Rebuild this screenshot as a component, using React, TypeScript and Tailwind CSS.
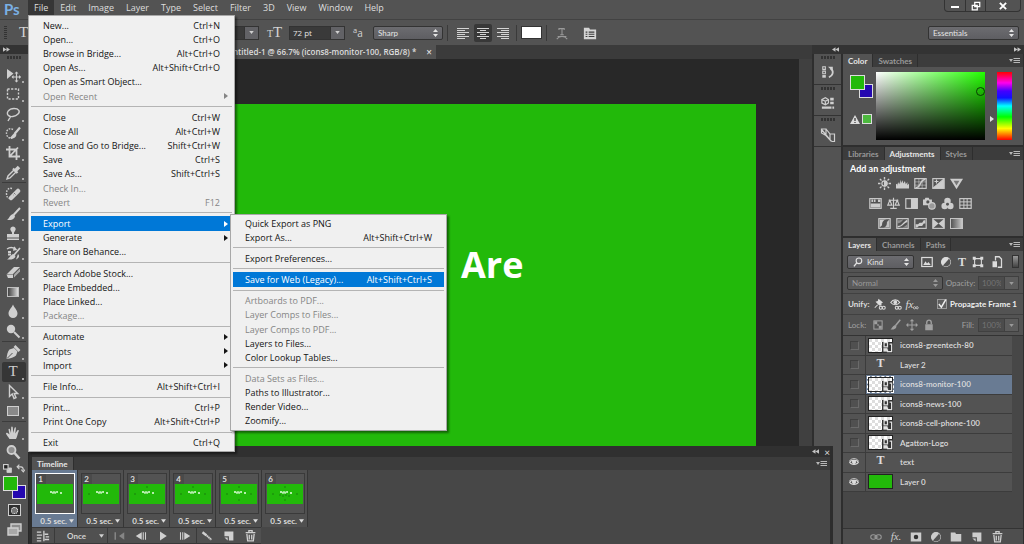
import React from 'react';

type IconProps = { className?: string };

type MenuEntry = {
  label: string;
  keys?: string;
  disabled?: boolean;
  active?: boolean;
  sub?: boolean;
};

const menuBar = ['File', 'Edit', 'Image', 'Layer', 'Type', 'Select', 'Filter', '3D', 'View', 'Window', 'Help'];

const fileMenu: MenuEntry[][] = [
  [
    { label: 'New...', keys: 'Ctrl+N' },
    { label: 'Open...', keys: 'Ctrl+O' },
    { label: 'Browse in Bridge...', keys: 'Alt+Ctrl+O' },
    { label: 'Open As...', keys: 'Alt+Shift+Ctrl+O' },
    { label: 'Open as Smart Object...' },
    { label: 'Open Recent', disabled: true, sub: true },
  ],
  [
    { label: 'Close', keys: 'Ctrl+W' },
    { label: 'Close All', keys: 'Alt+Ctrl+W' },
    { label: 'Close and Go to Bridge...', keys: 'Shift+Ctrl+W' },
    { label: 'Save', keys: 'Ctrl+S' },
    { label: 'Save As...', keys: 'Shift+Ctrl+S' },
    { label: 'Check In...', disabled: true },
    { label: 'Revert', keys: 'F12', disabled: true },
  ],
  [
    { label: 'Export', sub: true, active: true },
    { label: 'Generate', sub: true },
    { label: 'Share on Behance...' },
  ],
  [
    { label: 'Search Adobe Stock...' },
    { label: 'Place Embedded...' },
    { label: 'Place Linked...' },
    { label: 'Package...', disabled: true },
  ],
  [
    { label: 'Automate', sub: true },
    { label: 'Scripts', sub: true },
    { label: 'Import', sub: true },
  ],
  [{ label: 'File Info...', keys: 'Alt+Shift+Ctrl+I' }],
  [
    { label: 'Print...', keys: 'Ctrl+P' },
    { label: 'Print One Copy', keys: 'Alt+Shift+Ctrl+P' },
  ],
  [{ label: 'Exit', keys: 'Ctrl+Q' }],
];

const exportMenu: MenuEntry[][] = [
  [
    { label: 'Quick Export as PNG' },
    { label: 'Export As...', keys: 'Alt+Shift+Ctrl+W' },
  ],
  [{ label: 'Export Preferences...' }],
  [{ label: 'Save for Web (Legacy)...', keys: 'Alt+Shift+Ctrl+S', active: true }],
  [
    { label: 'Artboards to PDF...', disabled: true },
    { label: 'Layer Comps to Files...', disabled: true },
    { label: 'Layer Comps to PDF...', disabled: true },
    { label: 'Layers to Files...' },
    { label: 'Color Lookup Tables...' },
  ],
  [
    { label: 'Data Sets as Files...', disabled: true },
    { label: 'Paths to Illustrator...' },
    { label: 'Render Video...' },
    { label: 'Zoomify...' },
  ],
];

type Layer = { name: string; kind: 'smart' | 'text' | 'fill'; visible?: boolean; selected?: boolean };

const layers: Layer[] = [
  { name: 'icons8-greentech-80', kind: 'smart' },
  { name: 'Layer 2', kind: 'text' },
  { name: 'icons8-monitor-100', kind: 'smart', selected: true },
  { name: 'icons8-news-100', kind: 'smart' },
  { name: 'icons8-cell-phone-100', kind: 'smart' },
  { name: 'Agatton-Logo', kind: 'smart' },
  { name: 'text', kind: 'text', visible: true },
  { name: 'Layer 0', kind: 'fill', visible: true },
];

// 16x16 icon frame, strokes inherit the text colour
const Icon: React.FC<{ className?: string; children: React.ReactNode }> = ({ className = 'size-4', children }) => (
  <svg viewBox="0 0 16 16" className={className} fill="none" stroke="currentColor" strokeWidth="1.4" aria-hidden="true">
    {children}
  </svg>
);

const GlyphT: React.FC<{ className?: string }> = ({ className = 'text-[14px]' }) => (
  <span className={`font-['Liberation_Serif',serif] leading-none ${className}`}>T</span>
);

const Caret: React.FC<IconProps> = ({ className = 'w-1.5 h-1' }) => (
  <svg viewBox="0 0 6 4" className={className} fill="currentColor" aria-hidden="true"><path d="M0 0h6L3 4z" /></svg>
);

const DoubleArrow: React.FC<{ left?: boolean }> = ({ left }) => (
  <svg viewBox="0 0 8 5" className="w-[7px] h-[5px] text-[#c4c4c4]" fill="currentColor" aria-hidden="true">
    {left ? <path d="M4 0v5L0 2.5zM8 0v5L4 2.5z" /> : <path d="M0 0v5l4-2.5zM4 0v5l4-2.5z" />}
  </svg>
);

const EyeIcon: React.FC = () => (
  <Icon className="w-3 h-2.5">
    <path d="M1 8.500C3 4 13 4 15 8.500 13 13 3 13 1 8.500z" strokeWidth="1.700" />
    <circle cx="8" cy="8" r="2.600" fill="currentColor" />
    <path d="M1 6C4 1.500 12 1.500 15 6" />
  </Icon>
);

const TrashIcon: React.FC = () => (
  <Icon className="size-[13px]">
    <path d="M2 4.500h12M6 4V2h4v2M3.500 6l1 8.500h7l1-8.500M6.500 7v6M9.500 7v6" strokeWidth="1.600" />
  </Icon>
);

const NewIcon: React.FC = () => (
  <Icon className="size-[13px]">
    <path d="M3 3h11v11H8.500V9H3z" fill="currentColor" stroke="none" />
    <path d="M3 10.500h4V14z" fill="currentColor" stroke="none" />
  </Icon>
);

const HalfCircleIcon: React.FC = () => (
  <Icon className="size-3">
    <circle cx="8" cy="8" r="6" fill="currentColor" />
    <path d="M12 3.500A6 6 0 0 1 4 12.500z" fill="#535353" stroke="none" />
  </Icon>
);

const PanelMenuIcon: React.FC = () => (
  <svg viewBox="0 0 12 7" className="w-3 h-[7px] text-[#b8b8b8]" aria-hidden="true">
    <path d="M0 2h4L2 5z" fill="currentColor" />
    <path d="M4.500 1.500H11M4.500 3.500H11M4.500 5.500H11" stroke="currentColor" />
  </svg>
);

const tools: { name: string; active?: boolean; icon: React.ReactNode }[][] = [
  [
    { name: 'Move', icon: <Icon><path d="M2 2v10l6.500-5.500z" fill="currentColor" stroke="none" /><path d="M11.500 6v8M7.500 10h8" strokeWidth="1.200" /><path d="M11.500 4.500l2 2h-4zM11.500 15.500l2-2h-4zM6.500 10l2-2v4zM16 10l-2-2v4z" fill="currentColor" stroke="none" /></Icon> },
    { name: 'Marquee', icon: <Icon><rect x="2.500" y="3" width="11" height="10" strokeDasharray="2.200 1.400" /></Icon> },
    { name: 'Lasso', icon: <Icon><path d="M4 10C0 7 4 2.500 9 2.500s6.500 3 4 5.500-8 3.500-9.500 1.500c2 .5 2.500 2 1 3L3 15" /></Icon> },
    { name: 'Quick Selection', icon: <Icon><path d="M8 4.500C4 2.500 1.500 5 1.500 8s2 6 6 5" strokeDasharray="1.600 1.200" /><path d="M15 2.500L9.500 9" strokeWidth="2.200" /><path d="M10 8l1.500 1.500C11 13 8 14 4 13c2.500-.5 3-4 6-5z" fill="currentColor" stroke="none" /></Icon> },
    { name: 'Crop', icon: <Icon><path d="M4.500 1v10.500H15M1 4.500h10.500V15M5 11l8-8.500" strokeWidth="1.800" /></Icon> },
    { name: 'Eyedropper', icon: <Icon><path d="M2 14l1-3 6-6 2 2-6 6z" /><path d="M8 3.500l4.500 4.500" strokeWidth="2.200" /><path d="M10.500 5.500L14 2" strokeWidth="3.500" /></Icon> },
  ],
  [
    { name: 'Healing Brush', icon: <Icon><path d="M7 2.500C3 1.500 1.500 4.500 1.500 7.500s1 4 2 5" strokeDasharray="1.600 1.200" /><path d="M6 12L13 5" strokeWidth="4.500" strokeLinecap="round" /><path d="M9 7l1.500 1.500M8 9h.5" stroke="#777" strokeWidth="1" /></Icon> },
    { name: 'Brush', icon: <Icon><path d="M15 2L8.500 9" strokeWidth="2" /><path d="M8 8l2 2c-.5 3.500-4 4.500-8 4 2-1 2.500-5 6-6z" fill="currentColor" stroke="none" /></Icon> },
    { name: 'Clone Stamp', icon: <Icon><path d="M8 1.500a2.700 2.700 0 0 0-2 4.500l1 1.500V9H2v3.500h12V9H9V7.500L10 6a2.700 2.700 0 0 0-2-4.500zM2 13.500h12V15H2z" fill="currentColor" stroke="none" /></Icon> },
    { name: 'History Brush', icon: <Icon><path d="M2 4c3-2 6-1.500 8 0M9 2l2 2.500-3 .5" /><path d="M15 3L9 10M3 7h3M3 9.500h3" strokeWidth="1.800" /><path d="M8.500 9l2 2c-.5 3-4 4-8.500 3.500 2.500-1 3-4.500 6.500-5.500zM13 9c2 2 1 4-2 5.500" fill="currentColor" stroke="none" /></Icon> },
    { name: 'Eraser', icon: <Icon><path d="M9 3h6l-7 7H2z" fill="currentColor" stroke="none" /><path d="M1.500 10.500H8V14H3z" fill="currentColor" stroke="none" /><path d="M9 10.500L15 4.500v3L9 13.500z" fill="currentColor" stroke="none" opacity="0.700" /></Icon> },
    { name: 'Gradient', icon: <span className="block w-3 h-2.5 border border-[#c0c0c0] bg-linear-to-r from-[#444] to-[#ddd]" /> },
    { name: 'Blur', icon: <Icon><path d="M8 1.500c1 3 4.500 5.500 4.500 9a4.500 4.500 0 0 1-9 0c0-3.500 3.500-6 4.500-9z" fill="currentColor" stroke="none" /></Icon> },
    { name: 'Dodge', icon: <Icon><circle cx="6" cy="6" r="4.200" fill="currentColor" stroke="none" /><path d="M9 9l5.500 5.500" strokeWidth="2" /></Icon> },
  ],
  [
    { name: 'Pen', icon: <Icon><path d="M1.500 15c.5-4 1-7.500 3-9.500L9 4l3.500 3.500-1.500 4c-2 2-5.500 3-9.500 3.500z" fill="currentColor" stroke="none" /><path d="M2 14.500L7.500 9" stroke="#535353" strokeWidth="1" /><path d="M9.500 2l5 5" strokeWidth="2.600" /></Icon> },
    { name: 'Type', active: true, icon: <GlyphT className="text-[15px]" /> },
    { name: 'Path Selection', icon: <Icon><path d="M4.500 1.500v11l2.700-2.500 1.800 4.500 2-.8-1.800-4.200h3.500z" /></Icon> },
    { name: 'Rectangle', icon: <span className="block w-3 h-2.5 border border-[#cfcfcf] bg-[#8a8a8a]" /> },
  ],
  [
    { name: 'Hand', icon: <Icon><path d="M4.500 14C3.500 12 1 9.500 1 8.500s1.500-1 3.500 1L3.500 4.500c0-1 1.200-1.200 1.500 0L6 8l.2-5.500c0-1.200 1.500-1.200 1.600 0L8.200 8l1.300-5c.3-1 1.600-.8 1.400.3L10.300 8.500l2-3c.7-.9 1.900-.2 1.400.8-1 2.200-1.500 5.700-2.700 7.700z" fill="currentColor" stroke="none" /></Icon> },
    { name: 'Zoom', icon: <Icon><circle cx="6.500" cy="6" r="4" strokeWidth="1.800" fill="#8f8f8f" /><path d="M9.500 9l5 5.500" strokeWidth="2.600" /></Icon> },
  ],
];

const Menu: React.FC<{ groups: MenuEntry[][]; label: string; className: string }> = ({ groups, label, className }) => (
  <div role="menu" aria-label={label} className={`absolute flex flex-col border border-[#a8a8a8] bg-[#f0f0f0] px-0.5 text-[9px] leading-none text-[#141414] shadow-[2px_2px_2px_rgba(0,0,0,0.45)] ${className}`}>
    {groups.map((group, i) => (
      <React.Fragment key={i}>
        {i > 0 && <div role="separator" className="my-[3px] h-px shrink-0 bg-[#b4b4b4]" />}
        {group.map((entry) => (
          <button
            key={entry.label}
            role="menuitem"
            disabled={entry.disabled}
            className={`relative flex min-h-0 flex-1 items-center justify-between whitespace-nowrap pl-3 pr-3 ${
              entry.active ? 'bg-[#0078d7] text-white' : entry.disabled ? 'text-[#858585]' : ''
            }`}
          >
            <span>{entry.label}</span>
            {entry.keys && <span>{entry.keys}</span>}
            {entry.sub && (
              <svg viewBox="0 0 4 6" className="absolute right-1 w-1 h-1.5" fill="currentColor" aria-hidden="true">
                <path d="M0 0l4 3-4 3z" />
              </svg>
            )}
          </button>
        ))}
      </React.Fragment>
    ))}
  </div>
);

const Dropdown: React.FC<{ label: string; value: string; className: string; muted?: boolean; icon?: React.ReactNode }> = ({
  label,
  value,
  className,
  muted,
  icon,
}) => (
  <div className={`relative flex h-3.5 items-center rounded-xs border border-[#333] ${muted ? 'bg-[#5a5a5a] text-[#999]' : 'bg-linear-to-b from-[#6c6c70] to-[#5e5e62] text-[#e4e4e4]'} ${className}`}>
    {icon}
    <select aria-label={label} defaultValue={value} className="h-full w-full appearance-none bg-transparent pl-1 font-['Lato',sans-serif] text-[8px] leading-none outline-none">
      <option>{value}</option>
    </select>
    <svg viewBox="0 0 5 8" className="pointer-events-none absolute right-1 h-2 w-[5px]" fill="currentColor" aria-hidden="true">
      <path d="M0 3h5L2.500 0zM0 5h5L2.500 8z" />
    </svg>
  </div>
);

const NumberBox: React.FC<{ id: string; value: string; className: string; muted?: boolean }> = ({ id, value, className, muted }) => (
  <div className={`flex h-3.5 border ${muted ? 'border-[#404040] bg-[#4c4c4c] text-[#747474]' : 'border-[#333] bg-[#3a3a3a] text-[#e4e4e4]'} ${className}`}>
    <input id={id} aria-label={id} defaultValue={value} className="min-w-0 flex-1 bg-transparent px-[3px] text-[8px] leading-none outline-none" />
    <button aria-label={`${id} presets`} className={`flex w-3.5 shrink-0 items-center justify-center border-l ${muted ? 'border-[#404040] bg-[#5c5c5c] text-[#9a9a9a]' : 'border-[#333] bg-[#626266] text-[#d0d0d0]'}`}>
      <Caret className="w-[5px] h-[3px]" />
    </button>
  </div>
);

const Tabs: React.FC<{ names: string[]; active: string }> = ({ names, active }) => (
  <div className="flex h-[13px] shrink-0 items-stretch bg-[#3c3c3c] text-[8px] font-bold leading-none">
    {names.map((name) => (
      <button
        key={name}
        className={`border-r border-[#2e2e2e] px-[5px] ${name === active ? 'bg-[#535353] text-[#e6e6e6]' : 'text-[#999]'}`}
      >
        {name}
      </button>
    ))}
    <button aria-label="Panel menu" className="ml-auto flex items-center px-0.5">
      <PanelMenuIcon />
    </button>
  </div>
);

const Divider: React.FC = () => <span className="h-4 w-px shrink-0 bg-[#3a3a3a]" />;

const Grip: React.FC = () => (
  <span className="block h-[3px] w-3.5 bg-[repeating-linear-gradient(90deg,#333_0_2px,#535353_2px_3px)]" />
);

const AlignIcon: React.FC<{ mode: 'left' | 'center' | 'right' }> = ({ mode }) => {
  const short = { left: 'M0 4.500h8M0 8.500h8M0 12.500h8', center: 'M3 4.500h6M3 8.500h6M3 12.500h6', right: 'M4 4.500h8M4 8.500h8M4 12.500h8' }[mode];
  return (
    <svg viewBox="0 0 12 13" className="h-[13px] w-3" stroke="currentColor" aria-hidden="true">
      <path d="M0 2.500h12M0 6.500h12M0 10.500h12" />
      <path d={short} />
    </svg>
  );
};

const OptionsBar: React.FC = () => (
  <div className="flex h-[26px] shrink-0 items-center border-t border-[#424242] bg-[#535353] text-[#d4d4d4]">
    <div className="flex w-[259px] shrink-0 items-center justify-between pl-1">
      <span className="flex items-center gap-3">
        <span className="h-3.5 w-[3px] bg-[repeating-linear-gradient(#333_0_1px,#535353_1px_2px)]" />
        <GlyphT className="text-[15px]" />
      </span>
      <NumberBox id="Font style" value="" className="w-20" />
    </div>
    <span className="ml-1"><Divider /></span>
    <span className="ml-1 flex w-3.5 items-baseline">
      <GlyphT className="text-[10px]" /><GlyphT className="text-[15px]" />
    </span>
    <NumberBox id="Font size" value="72 pt" className="ml-2 w-14" />
    <span className="ml-2 w-3.5 text-[10px] leading-none"><sup>a</sup>a</span>
    <Dropdown label="Anti-aliasing" value="Sharp" className="ml-1.5 w-[70px]" />
    <div className="ml-1 flex items-center gap-0.5">
      <Divider />
      <button aria-label="Align left" className="ml-1 flex h-[18px] w-[18px] items-center justify-center"><AlignIcon mode="left" /></button>
      <button aria-label="Align center" className="flex h-[18px] w-[18px] items-center justify-center rounded-xs bg-[#383838]"><AlignIcon mode="center" /></button>
      <button aria-label="Align right" className="flex h-[18px] w-[18px] items-center justify-center"><AlignIcon mode="right" /></button>
    </div>
    <div className="ml-1 flex items-center gap-1">
      <Divider />
      <button aria-label="Text color" className="h-[13px] w-[21px] border border-[#333] bg-white" />
      <Divider />
    </div>
    <button aria-label="Warp text" className="ml-2 text-[#9a9a9a]">
      <Icon className="size-3.5"><path d="M4.500 4.500V3h6v1.500M8 3v7M6 10h4M2 15c3-4 9-4 12 0M3 12l10 0" strokeWidth="1.200" /></Icon>
    </button>
    <span className="ml-1.5"><Divider /></span>
    <button aria-label="Toggle panels" className="ml-2">
      <Icon className="size-3.5"><path d="M1 2h6l1 2h7v11H1z" fill="currentColor" stroke="none" /><path d="M3 7h2M6.500 7H13M3 9.500h2M6.500 9.500H13M3 12h2M6.500 12H13" stroke="#3c3c3c" strokeWidth="1.200" /></Icon>
    </button>
    <span className="ml-2"><Divider /></span>
    <Dropdown label="Workspace" value="Essentials" className="ml-auto mr-[5px] w-[91px]" />
  </div>
);

const Swatches: React.FC = () => (
  <div className="relative size-[23px]">
    <button aria-label="Background color" className="absolute bottom-0 right-0 size-3.5 border border-[#ddd] bg-[#2408b0]" />
    <button aria-label="Foreground color" className="absolute left-0 top-0 size-[15px] border border-[#ddd] bg-[#22b90a]" />
  </div>
);

const ToolBar: React.FC = () => (
  <div className="flex w-7 shrink-0 flex-col items-center bg-[#535353] text-[#cfcfcf]">
    <div className="flex h-[9px] w-full shrink-0 items-center bg-[#333] pl-[3px]"><DoubleArrow /></div>
    <div className="flex h-[11px] shrink-0 items-start pt-0.5"><Grip /></div>
    <div className="flex h-[397px] w-full shrink-0 flex-col px-0.5">
      {tools.map((group, i) => (
        <React.Fragment key={i}>
          {i > 0 && <div className="h-0.5 shrink-0 border-t border-[#3c3c3c]" />}
          {group.map((tool) => (
            <button
              key={tool.name}
              aria-label={tool.name}
              className={`relative flex min-h-0 flex-1 items-center justify-center pr-0.5 ${tool.active ? 'rounded-xs bg-[#363636]' : ''}`}
            >
              {tool.icon}
              {tool.name !== 'Zoom' && <span className="absolute bottom-0.5 right-0.5 size-[2px] bg-[#aaa]" />}
            </button>
          ))}
        </React.Fragment>
      ))}
    </div>
    <div className="flex h-3 w-full shrink-0 items-center justify-between px-[3px]">
      <Icon className="size-[9px]"><rect x="1" y="1" width="8" height="8" fill="#222" strokeWidth="2" /><path d="M10 7h5v8H7v-5h3z" fill="currentColor" /></Icon>
      <Icon className="size-[9px]"><path d="M3 5h6c3 0 4 2 4 6M6 1L2 5l4 4M9.500 10l3.500 4 3-4" strokeWidth="2" /></Icon>
    </div>
    <div className="mt-0.5"><Swatches /></div>
    <button aria-label="Quick mask" className="mt-[5px] flex h-3 w-[13px] shrink-0 items-center justify-center border border-[#cfcfcf] bg-[#2e2e2e]">
      <span className="size-[7px] rounded-full border border-dotted border-white bg-[#777]" />
    </button>
    <button aria-label="Screen mode" className="mt-1.5">
      <Icon className="size-4"><path d="M5 2h10v7H5z" fill="#8d8d8d" /><path d="M2 6h10v7H2z" fill="#a8a8a8" /></Icon>
    </button>
  </div>
);

const Dock: React.FC = () => (
  <div className="flex w-[29px] shrink-0 flex-col border-l-2 border-[#2e2e2e] bg-[#535353] text-[#cfcfcf]">
    {[
      <Icon key="history" className="size-3.5"><path d="M2 2h3v3H2zM2 7h3v3H2z" strokeWidth="1.200" /><path d="M1.500 11.500h4v3h-4z" fill="currentColor" stroke="none" /><path d="M9 14c5-2 6-7 2-10" strokeWidth="2" /><path d="M8 2h5.500v5z" fill="currentColor" stroke="none" /></Icon>,
      <Icon key="props" className="size-3.5"><path d="M1 4l4-2 3.500 2v4L5 10 1 8zM1 4l4 2 3.500-2M5 6v4" /><path d="M10.500 2h4v3h-4zM10.500 6.500h4v3h-4zM1 12h11v2.500H1zM13 12h2v2.500h-2z" fill="currentColor" stroke="none" /></Icon>,
      <Icon key="source"><path d="M1.500 2H6v6.500L1.500 6zM6 2l4 5v6L6 8.500M10 7h4.500v7.500H12L10 13M2 3l9 11" strokeWidth="1.200" /></Icon>,
    ].map((icon, i) => (
      <button key={i} aria-label={['History', 'Properties', 'Clone Source'][i]} className="flex h-[31px] shrink-0 flex-col items-center gap-1.5 border-b border-[#333] pt-0.5">
        <Grip />
        {icon}
      </button>
    ))}
  </div>
);

// x/y spots of the small icons that appear frame by frame
const frameDots = [
  [],
  [[6, 10]],
  [[6, 10], [18, 3]],
  [[6, 10], [18, 3], [30, 10]],
  [[6, 10], [18, 3], [30, 10], [18, 16]],
  [[6, 10], [18, 3], [30, 10], [18, 16], [13, 11], [16, 12], [19, 11], [22, 12]],
];

const Timeline: React.FC = () => (
  <section aria-label="Timeline" className="absolute bottom-0 left-[29px] right-[191px] flex h-[98px] flex-col border-x-3 border-[#2d2d2d] bg-[#474747] font-['Lato',sans-serif] text-[#dcdcdc]">
    <div className="flex h-[11px] shrink-0 items-center justify-end gap-[5px] bg-[#303030]">
      <DoubleArrow left />
      <button aria-label="Close timeline" className="text-[10px] leading-none">×</button>
    </div>
    <Tabs names={['Timeline']} active="Timeline" />
    <div className="flex flex-1">
      {frameDots.map((dots, i) => (
        <div key={i} className={`flex w-[46px] flex-col items-center border-r border-[#363636] pt-[3px] ${i === 0 ? 'bg-[#697b93]' : 'bg-[#505050]'}`}>
          <button aria-label={`Frame ${i + 1}`} className={`relative block h-[41px] w-10 border ${i === 0 ? 'border-white' : 'border-[#3a3a3a]'} bg-[#535353]`}>
            <svg viewBox="0 0 36 20" className="mx-auto h-5 w-9 bg-[#22b90a]" aria-hidden="true">
              <path d="M13 8h3v1h2v-1h3M23 9h2" stroke="#e8ffe4" strokeWidth="1.500" fill="none" strokeDasharray="2 .7" />
              {dots.map(([x, y]) => (
                <circle key={`${x}-${y}`} cx={x} cy={y} r="0.800" fill="#187a0e" />
              ))}
            </svg>
            <span className="absolute left-0 top-0 size-2.5 bg-[#4a4a4a] text-[8px] font-bold leading-[10px]">{i + 1}</span>
          </button>
          <button className="mt-[3px] flex items-center gap-0.5 self-end pr-[3px] text-[8px] font-bold leading-none">
            0.5 sec. <Caret className="w-[5px] h-1" />
          </button>
        </div>
      ))}
    </div>
    <div className="flex h-[17px] w-[229px] shrink-0 items-center border-y border-[#383838] bg-[#505050] text-[#d0d0d0]">
      <button aria-label="Convert to video timeline" className="flex w-[22px] justify-center"><Icon className="size-3.5"><path d="M1 3.500h5M1 7h6M1 10.500h5M9 2v12M10 6h4M11 9h4M10 12h5M1 13.500h5" strokeWidth="1.500" /></Icon></button>
      <Divider />
      <button className="flex w-[52px] items-center justify-between pl-3 pr-[3px] text-[8px] font-bold leading-none">Once <Caret className="w-[5px] h-1" /></button>
      <Divider />
      <div className="flex flex-1 items-center justify-around">
        <button aria-label="First frame" className="text-[#858585]"><Icon className="size-3"><path d="M3 3v10" strokeWidth="2" /><path d="M7 3v10M15 3v10L8 8z" fill="currentColor" stroke="none" /></Icon></button>
        <button aria-label="Previous frame"><Icon className="size-3"><path d="M9 3v10L1 8z" fill="currentColor" stroke="none" /><path d="M11 3v10M14 3v10" /></Icon></button>
        <button aria-label="Play"><Icon className="size-3"><path d="M4 2v12l9-6z" fill="currentColor" stroke="none" /></Icon></button>
        <button aria-label="Next frame"><Icon className="size-3"><path d="M7 3v10l8-5z" fill="currentColor" stroke="none" /><path d="M2 3v10M5 3v10" /></Icon></button>
      </div>
      <Divider />
      <div className="flex w-[64px] items-center justify-around">
        <button aria-label="Tween"><Icon className="size-3"><path d="M2 3l5 4" strokeWidth="3" /><path d="M6 6l8 7" strokeWidth="2.600" strokeDasharray="2 .5" /></Icon></button>
        <button aria-label="Duplicate frame"><NewIcon /></button>
        <button aria-label="Delete frame"><TrashIcon /></button>
      </div>
    </div>
  </section>
);

const ColorPanel: React.FC = () => (
  <section aria-label="Color" className="flex h-[93px] shrink-0 flex-col border-b-2 border-[#2e2e2e]">
    <Tabs names={['Color', 'Swatches']} active="Color" />
    <div className="flex items-start pl-[7px] pr-[11px] pt-[5px]">
      <div className="flex w-[26px] flex-col">
        <div className="pt-[3px]"><Swatches /></div>
        <div className="flex items-center gap-0.5 pt-4">
          <svg viewBox="0 0 10 9" className="h-[9px] w-2.5" aria-hidden="true"><path d="M5 0l5 9H0z" fill="#ddd" /><path d="M5 3v3M5 7v1" stroke="#333" strokeWidth="1.200" /></svg>
          <span className="size-2.5 border border-[#ddd] bg-[#4cb83e]" />
        </div>
      </div>
      <div className="relative h-[68px] flex-1 bg-[linear-gradient(to_top,#000,transparent),linear-gradient(to_right,#fff,#22ff00)]">
        <span className="absolute right-0 top-[15px] size-[9px] rounded-full border border-[#0a3a04]" />
      </div>
      <svg viewBox="0 0 4 6" className="ml-[5px] mt-11 h-1.5 w-1" fill="#e0e0e0" aria-hidden="true"><path d="M0 0l4 3-4 3z" /></svg>
      <div className="ml-[3px] h-[68px] w-[15px] bg-[linear-gradient(#f00,#f0e_16%,#40f_28%,#11f_38%,#0ff_50%,#0f0_66%,#ff0_83%,#f00)]" />
    </div>
  </section>
);

const Box: React.FC<{ children?: React.ReactNode }> = ({ children }) => (
  <Icon className="size-[13px]"><rect x="1" y="2" width="14" height="12" />{children}</Icon>
);

const adjustmentRows = [
  [
    <Icon key="b" className="size-[13px]"><circle cx="8" cy="8" r="3.200" /><path d="M8 5v6a3 3 0 0 0 0-6z" fill="currentColor" /><path d="M8 0v3M8 13v3M0 8h3M13 8h3M2.300 2.300l2 2M11.700 11.700l2 2M2.300 13.700l2-2M11.700 4.300l2-2" strokeWidth="1.700" /></Icon>,
    <Icon key="l" className="size-[13px]"><path d="M0 14V9l2-1v3l1-5 1 3 2-6v5l2-4 1 4 2-3 1 4 2-3v4l2-2v6z" fill="currentColor" stroke="none" /></Icon>,
    <Box key="c"><path d="M1 6h14M1 10h14M6 2v12M10 2v12" strokeWidth="0.700" /><path d="M2 13c8 0 4-10 12-10" strokeWidth="1.800" /></Box>,
    <Box key="e"><path d="M2 13L14 3v10z" fill="currentColor" /><path d="M3 5.500h5M5.500 3v5" /></Box>,
    <Icon key="v" className="size-[13px]"><path d="M0 2h16L8 15z" fill="currentColor" stroke="none" /><path d="M4.500 4.500h7L8 10.500z" fill="#777" stroke="none" /></Icon>,
  ],
  [
    <Box key="h"><path d="M2 8h12v5H2zM3 3h2v3H3zM6 3h2v3H6zM11 3h3v3h-3z" fill="currentColor" stroke="none" /></Box>,
    <Icon key="bal" className="size-[13px]"><path d="M8 1v13M4 14h8M2 4h12M3.500 4L1 10h5zM12.500 4L10 10h5z" /></Icon>,
    <Box key="bw"><path d="M8 2h7v12H8z" fill="currentColor" /></Box>,
    <Icon key="p" className="size-[13px]"><path d="M0 3h2l1-2h4l1 2h3v7H0z" fill="currentColor" stroke="none" /><circle cx="6" cy="6" r="2" fill="#535353" stroke="none" /><circle cx="11" cy="11" r="4" fill="#999" /></Icon>,
    <Icon key="m" className="size-[13px]"><circle cx="8" cy="5" r="4" fill="currentColor" stroke="none" /><circle cx="4.500" cy="11" r="4" fill="currentColor" stroke="none" /><circle cx="11.500" cy="11" r="4" fill="currentColor" stroke="none" /><circle cx="8" cy="9" r="1.800" fill="#535353" stroke="none" /></Icon>,
    <Box key="g"><path d="M1 6h14M1 10h14M6 2v12M10 2v12" strokeWidth="1.200" /></Box>,
  ],
  [
    <Box key="i"><path d="M2 13V3h9c-5 0-6 4-6 7z" fill="currentColor" stroke="none" /><path d="M14 3v10H5c5 0 6-3 6-7z" fill="currentColor" stroke="none" opacity="0.900" /></Box>,
    <Box key="po"><path d="M2 11c6 0 5-4 12-8v3c-4 1-5 5-12 7z" fill="currentColor" stroke="none" /><path d="M2 4c5 0 5-1 7-1-2 3-4 4-7 5zM14 9v4H8c3-1 4-3 6-4z" fill="currentColor" stroke="none" opacity="0.500" /></Box>,
    <Box key="t"><path d="M2 9h3l2-2h3l2-3h2v4h-2l-2 3H6l-2 2H2z" fill="currentColor" stroke="none" /></Box>,
    <Box key="s"><path d="M1 2l7 6-7 6zM15 2L8 8l7 6z" fill="currentColor" stroke="none" /></Box>,
    <span key="gm" className="block h-[11px] w-[13px] border border-[#c4c4c4] bg-linear-to-r from-[#555] to-[#c8c8c8]" />,
  ],
];

const AdjustmentsPanel: React.FC = () => (
  <section aria-label="Adjustments" className="flex h-[91px] shrink-0 flex-col border-b-2 border-[#2e2e2e]">
    <Tabs names={['Libraries', 'Adjustments', 'Styles']} active="Adjustments" />
    <h3 className="px-[7px] pt-1 text-[9px] font-bold leading-[10px] text-white">Add an adjustment</h3>
    <div className="flex flex-col gap-[7px] pr-[25px] pt-[3px] text-[#cdcdcd]">
      {adjustmentRows.map((row, i) => (
        <div key={i} className="flex h-[13px] items-center justify-center gap-[5px]">
          {row.map((icon, j) => (
            <button key={j} aria-label={`Adjustment ${i + 1}.${j + 1}`}>{icon}</button>
          ))}
        </div>
      ))}
    </div>
  </section>
);

const LayerThumb: React.FC<{ layer: Layer }> = ({ layer }) => {
  if (layer.kind === 'text') return <span className="flex w-[25px] justify-center pb-1"><GlyphT className="text-[12px]" /></span>;
  if (layer.kind === 'fill') return <span className="block h-[15px] w-[25px] border border-[#222] bg-[#22b90a]" />;
  return (
    <span className={`relative block h-[15px] w-[25px] border bg-[repeating-conic-gradient(#fff_0_25%,#ddd_0_50%)] bg-size-[6px_6px] ${layer.selected ? 'border-[#222] outline-1 outline-dashed outline-white' : 'border-[#222]'}`}>
      <span className="absolute -bottom-px -right-px size-[11px] bg-[#333] text-[#e0e0e0]">
        <Icon className="size-[11px]"><path d="M3 1h5v6H3zM11 3h3v11H8v-3" strokeWidth="1.800" /><path d="M2 9h6v5H2z" fill="currentColor" stroke="none" /></Icon>
      </span>
    </span>
  );
};

const LayersPanel: React.FC = () => (
  <section aria-label="Layers" className="flex min-h-0 flex-1 flex-col text-[8px] leading-none text-[#dcdcdc]">
    <Tabs names={['Layers', 'Channels', 'Paths']} active="Layers" />
    <div className="flex h-[22px] shrink-0 items-center border-b border-[#414141] pl-1 pr-1">
      <Dropdown
        label="Filter kind"
        value="Kind"
        className="w-[67px]"
        icon={<Icon className="ml-[5px] size-2.5 shrink-0"><circle cx="9.500" cy="6" r="4.500" strokeWidth="1.800" /><path d="M6 9.500L1.500 15" strokeWidth="2.200" /></Icon>}
      />
      <div className="flex flex-1 items-center justify-around pl-1 pr-1.5">
        <button aria-label="Pixel layers"><Icon className="size-3"><rect x="1" y="2" width="14" height="12" strokeWidth="1.600" /><path d="M3 12l3-5 2 3 2-2 3 4z" fill="currentColor" stroke="none" /></Icon></button>
        <button aria-label="Adjustment layers"><HalfCircleIcon /></button>
        <button aria-label="Type layers"><GlyphT className="text-[12px] font-bold" /></button>
        <button aria-label="Shape layers"><Icon className="size-3"><path d="M3.500 3.500h9v9h-9z" /><path d="M1 1h4v4H1zM11 1h4v4h-4zM1 11h4v4H1zM11 11h4v4h-4z" fill="currentColor" stroke="none" /></Icon></button>
        <button aria-label="Smart objects"><Icon className="size-3"><path d="M6 6V1h5l3 3v11H9" strokeWidth="1.700" /><path d="M2 7h6v8H2z" fill="currentColor" stroke="none" /></Icon></button>
      </div>
      <button aria-label="Toggle filter" className="h-[13px] w-[7px] border border-[#333] bg-linear-to-b from-[#999] to-[#444]" />
    </div>
    <div className="flex h-[21px] shrink-0 items-center justify-between border-b border-[#414141] pl-1 pr-1">
      <Dropdown label="Blend mode" value="Normal" muted className="w-24" />
      <label htmlFor="Opacity" className="text-[#a0a0a0]">Opacity:</label>
      <NumberBox id="Opacity" value="100%" muted className="w-[41px]" />
    </div>
    <div className="flex h-[21px] shrink-0 items-center border-b border-[#414141] pl-[5px] pr-1.5">
      <span className="font-bold">Unify:</span>
      <div className="ml-1 flex gap-1">
        <button aria-label="Unify position"><Icon className="size-3"><path d="M6 1l6 5-2 1 0 3-3 0-5-5 3-1z" fill="currentColor" stroke="none" /><path d="M5 9l-4 4" /><circle cx="9" cy="13" r="2" /><circle cx="13" cy="13" r="2" /></Icon></button>
        <button aria-label="Unify visibility"><Icon className="size-3"><path d="M1 6c3-5 9-5 12 0-3 4-9 4-12 0z" /><circle cx="7" cy="5.500" r="1.800" fill="currentColor" /><circle cx="9" cy="13" r="2" /><circle cx="13" cy="13" r="2" /></Icon></button>
        <button aria-label="Unify style" className="flex items-end"><i className="font-['Liberation_Serif',serif] text-[11px] leading-none">fx</i><Icon className="size-1.5"><circle cx="4" cy="10" r="3" strokeWidth="2" /><circle cx="11" cy="10" r="3" strokeWidth="2" /></Icon></button>
      </div>
      <label className="ml-auto flex items-center gap-[3px] whitespace-nowrap font-bold text-[#eee]">
        <span className="relative flex size-2.5">
          <input type="checkbox" defaultChecked className="size-2.5 appearance-none border border-[#999] bg-[#5e5e5e]" />
          <Icon className="pointer-events-none absolute inset-0 size-2.5"><path d="M3 8l4 5 7-12" strokeWidth="2.400" /></Icon>
        </span>
        Propagate Frame 1
      </label>
    </div>
    <div className="flex h-[21px] shrink-0 items-center border-b border-[#333] pl-[5px] pr-1 text-[#a0a0a0]">
      <span>Lock:</span>
      <div className="ml-1.5 flex items-center gap-[5px]">
        <button aria-label="Lock transparency"><Icon className="size-3"><rect x="2.500" y="2.500" width="11" height="11" /><path d="M3 3h4v4H3zM9 9h4v4H9zM7 7h2v2H7z" fill="currentColor" stroke="none" /></Icon></button>
        <button aria-label="Lock pixels"><Icon className="size-3"><path d="M15 1L8.500 9" strokeWidth="2" /><path d="M8 8l2 2c-.5 3.500-4 4.500-8 4 2-1 2.500-5 6-6z" fill="currentColor" stroke="none" /></Icon></button>
        <button aria-label="Lock position"><Icon className="size-3"><path d="M8 2v12M2 8h12" /><path d="M8 0l3 3H5zM8 16l3-3H5zM0 8l3-3v6zM16 8l-3-3v6z" fill="currentColor" stroke="none" /></Icon></button>
        <button aria-label="Lock all"><Icon className="size-3"><path d="M3 7h10v8H3z" fill="currentColor" stroke="none" /><path d="M5 7V4.500a3 3 0 0 1 6 0V7" strokeWidth="1.800" /></Icon></button>
      </div>
      <label htmlFor="Fill" className="ml-auto mr-1">Fill:</label>
      <NumberBox id="Fill" value="100%" muted className="w-[41px]" />
    </div>
    <div className="min-h-0 flex-1 bg-[#474747] pr-[11px]">
      <ul className="flex h-[156px] flex-col text-[8px]">
        {layers.map((layer) => (
          <li key={layer.name} className="flex min-h-0 flex-1 items-stretch border-b border-[#3c3c3c] bg-[#535353]">
            <button aria-label={`Toggle ${layer.name}`} className="flex w-[23px] shrink-0 items-center justify-center border-r border-[#3c3c3c]">
              {layer.visible ? <EyeIcon /> : <span className="size-[9px] border border-[#404040] border-b-[#6a6a6a] border-r-[#6a6a6a] bg-[#505050]" />}
            </button>
            <button className={`flex flex-1 items-center gap-[7px] whitespace-nowrap pl-0.5 font-semibold ${layer.selected ? 'bg-[#697b93]' : ''}`}>
              <LayerThumb layer={layer} />
              {layer.name}
            </button>
          </li>
        ))}
      </ul>
    </div>
    <div className="flex h-4 shrink-0 items-center gap-2 border-t border-[#333] bg-[#4e4e4e] pl-[27px] text-[#cdcdcd]">
      <button aria-label="Link layers" className="text-[#999]"><Icon className="size-3"><rect x="1" y="5" width="7" height="6" rx="3" /><rect x="8" y="5" width="7" height="6" rx="3" /><path d="M5 8h6" /></Icon></button>
      <button aria-label="Layer style" className="w-3 font-['Liberation_Serif',serif] text-[11px] italic leading-none">fx.</button>
      <button aria-label="Add mask"><Icon className="size-3"><path d="M1 2h14v12H1z" fill="currentColor" stroke="none" /><circle cx="8" cy="8" r="3" fill="#333" stroke="none" /></Icon></button>
      <button aria-label="New adjustment layer"><HalfCircleIcon /></button>
      <button aria-label="New group"><Icon className="size-3"><path d="M1 2h6l1 2h7v10H1z" fill="currentColor" stroke="none" /></Icon></button>
      <button aria-label="New layer"><NewIcon /></button>
      <button aria-label="Delete layer"><TrashIcon /></button>
    </div>
  </section>
);

const App: React.FC = () => {
  return (
    <div className="relative flex h-screen flex-col overflow-hidden bg-[#535353] font-['Open_Sans',sans-serif]">
      <header className="flex h-[19px] shrink-0 items-start text-[9px] leading-none text-[#dedede]">
        <span className="w-7 pl-1 font-['Lato',sans-serif] text-[15px] font-bold leading-[18px] text-[#7ab0e4]">Ps</span>
        <nav className="flex h-[15px]">
          {menuBar.map((name) => (
            <button key={name} className={`px-1.5 ${name === 'File' ? 'bg-[#363636]' : ''}`}>{name}</button>
          ))}
        </nav>
        <div className="ml-auto mr-[3px] flex h-3 rounded-b-sm border border-t-0 border-[#333] text-white">
          <button aria-label="Minimize" className="flex w-5 items-center justify-center"><span className="mt-0.5 h-0.5 w-2 bg-current" /></button>
          <button aria-label="Restore" className="flex w-[21px] items-center justify-center border-x border-[#333]"><Icon className="size-2.5"><path d="M6 2h8v7H6zM2 7h8v7H2z" strokeWidth="2" fill="#535353" /></Icon></button>
          <button aria-label="Close" className="flex w-[34px] items-center justify-center"><Icon className="size-2.5"><path d="M3 3l10 10M13 3L3 13" strokeWidth="3" /></Icon></button>
        </div>
      </header>

      <OptionsBar />

      <main className="relative flex min-h-0 flex-1">
        <ToolBar />
        <div className="flex min-w-0 flex-1 flex-col bg-[#282828]">
          <div className="flex h-3.5 shrink-0 bg-[#3b3b3b]">
            <div className="flex w-[408px] items-center justify-end gap-2.5 bg-[#535353] pr-1 text-[8px] font-semibold leading-none text-[#dcdcdc]">
              <span className="whitespace-nowrap">Untitled-1 @ 66.7% (icons8-monitor-100, RGB/8) *</span>
              <button aria-label="Close tab" className="text-[10px] leading-none">×</button>
            </div>
          </div>
          <div className="flex min-h-0 flex-1">
            <div className="flex flex-1 pl-10 pr-[43px] pt-[45px]">
              <div className="flex-1 bg-[#22b90a] pl-[393px] pt-[137px]">
                <span className="font-['Comic_Sans_MS','Open_Sans',sans-serif] text-[36px] font-bold leading-[48px] text-white">Are</span>
              </div>
            </div>
            <div className="w-[13px] bg-[#404040]" />
          </div>
        </div>

        <aside className="flex w-[212px] shrink-0 flex-col font-['Lato',sans-serif]">
          <div className="flex h-[9px] shrink-0 items-center justify-between bg-[#333] pl-5 pr-[3px]">
            <DoubleArrow left />
            <DoubleArrow />
          </div>
          <div className="flex min-h-0 flex-1">
            <Dock />
            <div className="flex min-w-0 flex-1 flex-col border-l-2 border-r border-[#2e2e2e] bg-[#535353]">
              <ColorPanel />
              <AdjustmentsPanel />
              <LayersPanel />
            </div>
          </div>
        </aside>

        <Timeline />
      </main>

      <Menu label="File" groups={fileMenu} className="left-7 top-[15px] h-[437px] w-[207px] pt-0.5 pb-px" />
      <Menu label="Export" groups={exportMenu} className="left-[230px] top-[214px] h-[217px] w-[217px] pt-px pb-0.5" />
    </div>
  );
};

export default App;
